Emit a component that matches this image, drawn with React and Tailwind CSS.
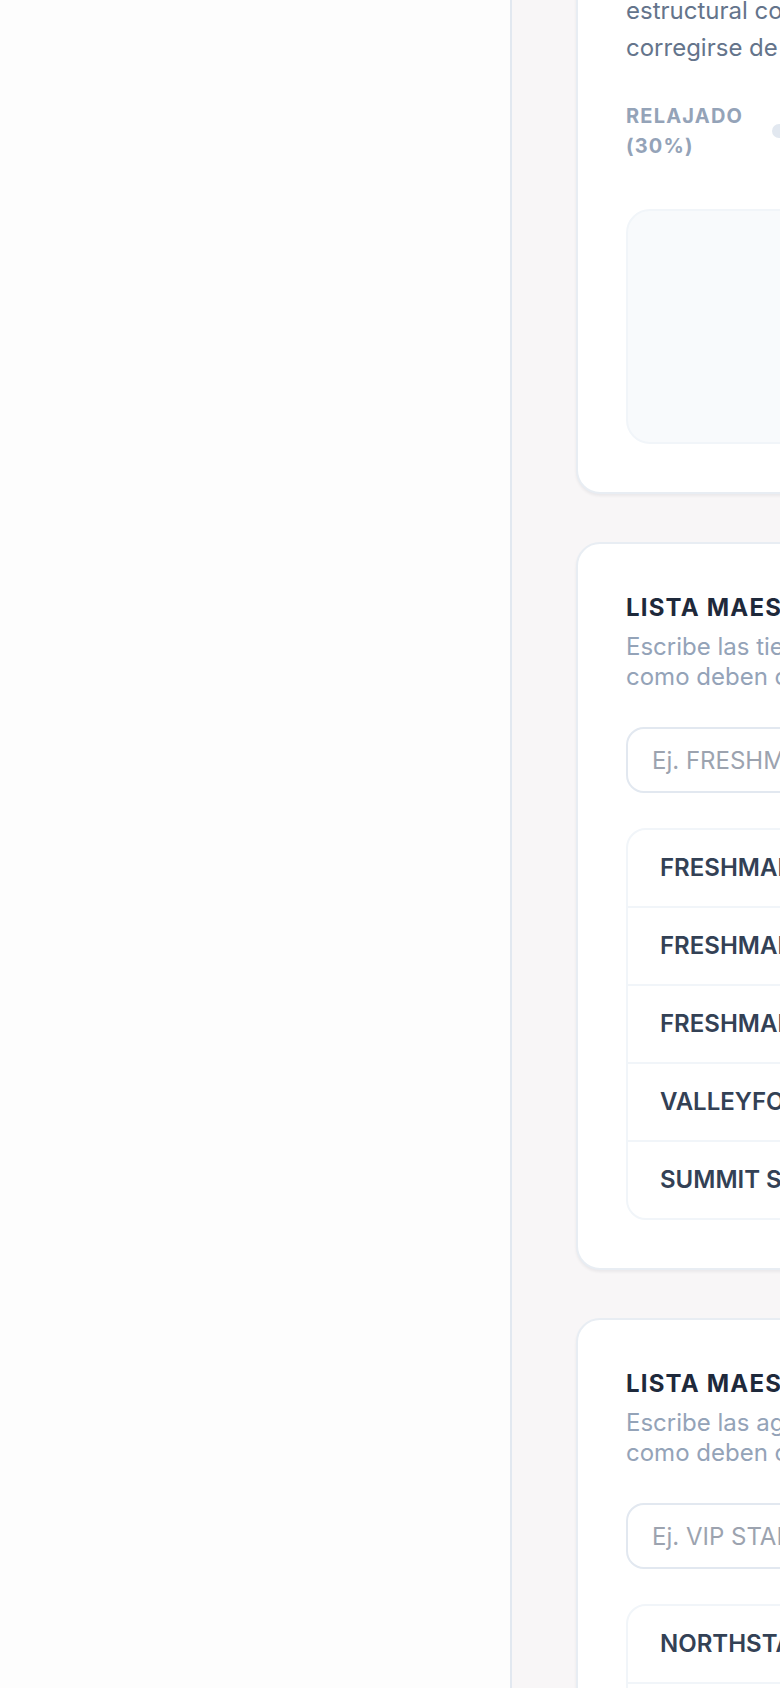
import React from "react";

function MasterList({ title, lines, placeholder, items }) {
  return (
    <section className="w-[1000px] rounded-3xl border-2 border-[#e8edf3] bg-white p-12 shadow-[0_2px_3px_rgba(15,23,42,0.06)]">
      <h3 className="text-[24px] font-bold leading-[32px] tracking-[0.05em] text-[#1e293b]">{title}</h3>
      <p className="mt-2 text-[24px] leading-[30px] text-[#94a3b8]">
        {lines[0]}
        <br />
        {lines[1]}
      </p>
      <input
        readOnly
        placeholder={placeholder}
        className="mt-[35px] block h-[66px] w-full rounded-[18px] border-2 border-[#e2e8f0] bg-white px-6 text-[24px] text-[#334155] outline-none placeholder:text-[#9ca3af]"
      />
      <ul className="mt-[35px] divide-y-2 divide-[#f1f5f9] rounded-[20px] border-2 border-[#f1f5f9]">
        {items.map((it, i) => (
          <li key={i} className="flex items-center justify-between px-8 py-6 text-[24px] font-semibold leading-[28px] text-[#334155]">
            <span>{it}</span>
            <span className="text-[20px] text-[#cbd5e1]">×</span>
          </li>
        ))}
      </ul>
    </section>
  );
}

export default function App() {
  return (
    <div
      className="flex h-[1688px] w-[780px] overflow-hidden bg-[#f8f6f7]"
      style={{ fontFamily: "Inter, 'Noto Sans', sans-serif" }}
    >
      <aside className="h-full w-[512px] shrink-0 border-r-2 border-[#e2e8f0] bg-[#fdfdfd]" />
      <main className="-mt-[58px] flex shrink-0 flex-col gap-[48px] pl-[64px]">
        <section className="w-[1000px] rounded-3xl border-2 border-[#e8edf3] bg-white p-12 shadow-[0_2px_3px_rgba(15,23,42,0.06)]">
          <p className="text-[24px] leading-[37px] text-[#64748b]">
            estructural con el resto del recorrido y debe
            <br />
            corregirse de inmediato antes de publicar.
          </p>
          <div className="mt-[35px] flex items-center gap-[24px]">
            <span className="w-[122px] shrink-0 text-[20px] font-bold leading-[30px] tracking-[0.06em] text-[#94a3b8]">
              RELAJADO (30%)
            </span>
            <div className="relative h-[14px] flex-1 rounded-full bg-[#e2e8f0]">
              <div className="absolute left-[55%] top-1/2 h-[28px] w-[28px] -translate-y-1/2 rounded-full border-2 border-white bg-[#6366f1] shadow" />
            </div>
            <span className="w-[122px] shrink-0 text-right text-[20px] font-bold leading-[30px] tracking-[0.06em] text-[#94a3b8]">
              ESTRICTO (100%)
            </span>
          </div>
          <div className="mt-[48px] h-[235px] rounded-3xl border-2 border-[#f1f5f9] bg-[#f8fafc]" />
        </section>

        <MasterList
          title="LISTA MAESTRA DE TIENDAS"
          lines={["Escribe las tiendas autorizadas exactamente", "como deben coincidir en los reportes."]}
          placeholder="Ej. FRESHMART CENTRO"
          items={["FRESHMART CENTRO", "FRESHMART NORTE", "FRESHMART SUR", "VALLEYFOODS", "SUMMIT STORES"]}
        />

        <MasterList
          title="LISTA MAESTRA DE AGENCIAS"
          lines={["Escribe las agencias autorizadas exactamente", "como deben coincidir en los reportes."]}
          placeholder="Ej. VIP STAR TRAVEL"
          items={["NORTHSTAR AGENCY", "VIP STAR TRAVEL", "BLUE SKY TOURS"]}
        />
      </main>
    </div>
  );
}
